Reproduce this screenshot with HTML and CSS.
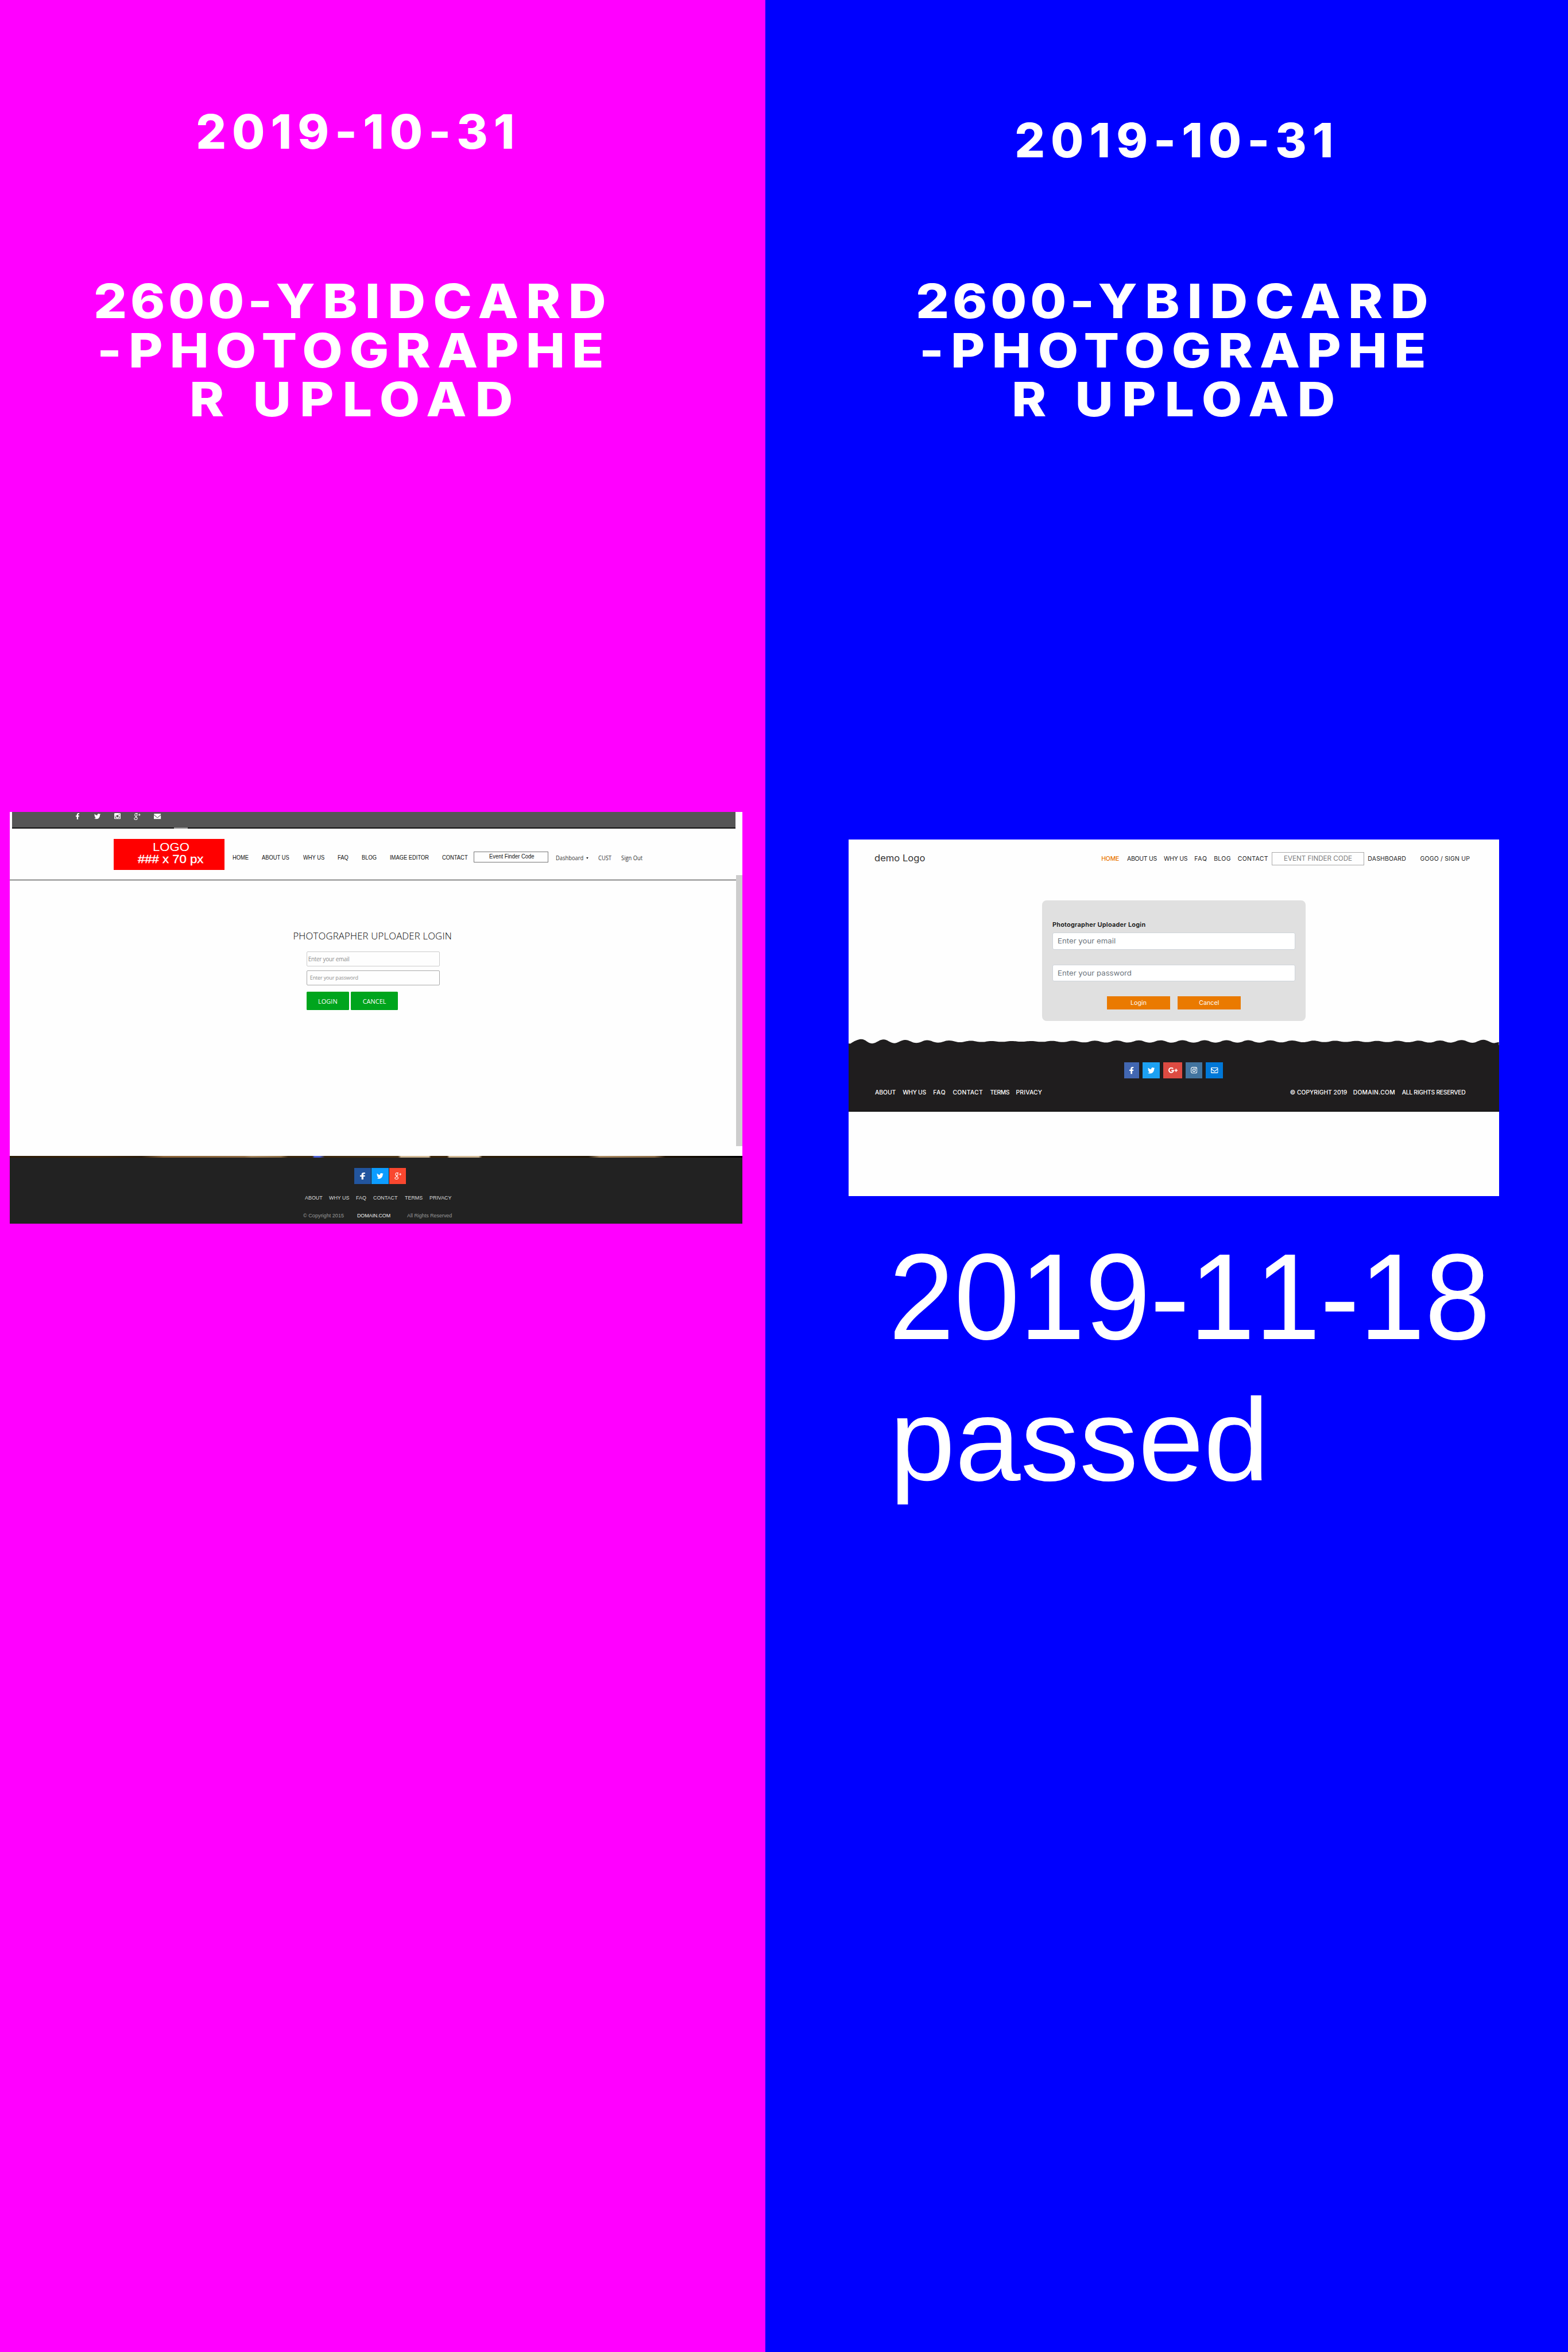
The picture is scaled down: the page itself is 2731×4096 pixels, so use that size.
FILE: index.html
```html
<!DOCTYPE html>
<html lang="en">
<head>
<meta charset="utf-8">
<title>2600-YBIDCARD-PHOTOGRAPHER UPLOAD</title>
<link rel="stylesheet" href="styles.css">
</head>
<body>
<svg class="sprite" aria-hidden="true">
  <symbol id="fb" viewBox="22 0 276 512" preserveAspectRatio="none"><path d="M279.14 288l14.22-92.66h-88.91v-60.13c0-25.35 12.42-50.06 52.24-50.06h40.42V6.26S260.43 0 225.36 0c-73.22 0-121.08 44.38-121.08 124.72v70.62H22.89V288h81.39v224h100.17V288z"/></symbol>
  <symbol id="tw" viewBox="0 48 512 416" preserveAspectRatio="none"><path d="M459.37 151.716c.325 4.548.325 9.097.325 13.645 0 138.72-105.583 298.558-298.558 298.558-59.452 0-114.68-17.219-161.137-47.106 8.447.974 16.568 1.299 25.34 1.299 49.055 0 94.213-16.568 130.274-44.832-46.132-.975-84.792-31.188-98.112-72.772 6.498.974 12.995 1.624 19.818 1.624 9.421 0 18.843-1.3 27.614-3.573-48.081-9.747-84.143-51.98-84.143-102.985v-1.299c13.969 7.797 30.214 12.67 47.431 13.319-28.264-18.843-46.781-51.005-46.781-87.391 0-19.492 5.197-37.36 14.294-52.954 51.655 63.675 129.3 105.258 216.365 109.807-1.624-7.797-2.599-15.918-2.599-24.04 0-57.828 46.782-104.934 104.934-104.934 30.213 0 57.502 12.67 76.67 33.137 23.715-4.548 46.456-13.32 66.599-25.34-7.798 24.366-24.366 44.833-46.132 57.827 21.117-2.273 41.584-8.122 60.426-16.243-14.292 20.791-32.161 39.308-52.628 54.253z"/></symbol>
  <symbol id="ig-old" viewBox="0 0 16 16" preserveAspectRatio="none"><path fill-rule="evenodd" d="M2 0h12q2 0 2 2v12q0 2-2 2H2q-2 0-2-2V2q0-2 2-2zM2 6.8V13q0 1 1 1h10q1 0 1-1V6.8h-1.4A5 5 0 1 1 3.4 6.8zM8 4.9a3.2 3.2 0 1 0 0 6.4 3.2 3.2 0 0 0 0-6.4zM11.4 2h2.2v2.3h-2.2z"/></symbol>
  <symbol id="gp-old" viewBox="0 0 16 16" preserveAspectRatio="none"><g fill="none" stroke="currentColor"><ellipse cx="5.2" cy="4" rx="2.7" ry="3.3" stroke-width="1.5"/><path stroke-width="1.4" d="M5.5.7H9.3M5.2 7.3C3.6 8.6 6.6 9.2 7.6 10.4 9.6 13 7.6 15.3 4.7 15.3 1.6 15.3.4 13.4 1.6 11.6 2.4 10.4 4 9.9 6 9.9"/><path stroke-width="1.3" d="M10.6 3.9H16M13.3 1.2V6.6"/></g></symbol>
  <symbol id="gp" viewBox="0 0 16 10" preserveAspectRatio="none"><g fill="none" stroke="currentColor"><path stroke-width="2" d="M8.1 2.2A4 4 0 1 0 9 5.2H5.2"/><path stroke-width="1.7" d="M10.8 5H16M13.4 2.3V7.7"/></g></symbol>
  <symbol id="ig" viewBox="0 0 16 16" preserveAspectRatio="none"><g fill="none" stroke="currentColor"><rect x=".8" y=".8" width="14.4" height="14.4" rx="4" stroke-width="1.6"/><circle cx="8" cy="8" r="3.2" stroke-width="1.7"/></g><circle cx="12.2" cy="3.8" r="1"/></symbol>
  <symbol id="mail-solid" viewBox="0 0 16 12" preserveAspectRatio="none"><path d="M0 1.2Q0 0 1.2 0h13.6Q16 0 16 1.2v.5L8.8 7.5Q8 8.1 7.2 7.5L0 1.7zM0 3.2l6.5 5.2q1.5 1.1 3 0L16 3.2V10.8Q16 12 14.8 12H1.2Q0 12 0 10.8z"/></symbol>
  <symbol id="mail" viewBox="0 0 16 12" preserveAspectRatio="none"><g fill="none" stroke="currentColor" stroke-width="1.6"><rect x=".8" y=".8" width="14.4" height="10.4" rx=".8"/><path d="M1 3.2 8 8.2l7-5"/></g></symbol>
</svg>

<main class="board">
  <section class="panel panel-design">
    <h2 class="date">2019-10-31</h2>
    <h1 class="title"><span class="l1"><em>2600-</em>YBIDCARD</span><span class="l2">-PHOTOGRAPHE</span><span class="l3">R UPLOAD</span></h1>

    <div class="mock mock-a">
      <div class="topbar">
        <svg class="a-fb"><use href="#fb"/></svg>
        <svg class="a-tw"><use href="#tw"/></svg>
        <svg class="a-ig"><use href="#ig-old"/></svg>
        <svg class="a-gp"><use href="#gp-old"/></svg>
        <svg class="a-ml"><use href="#mail-solid"/></svg>
        <i class="notch"></i>
      </div>
      <header class="head-a">
        <div class="logo-a"><span class="lg1">LOGO</span><span class="lg2">### x 70 px</span></div>
        <a>HOME</a><a>ABOUT US</a><a>WHY US</a><a>FAQ</a><a>BLOG</a><a>IMAGE EDITOR</a><a>CONTACT</a>
        <div class="finder-a"><span>Event Finder Code</span></div>
        <a class="user">Dashboard<i class="caret"></i></a><a class="user">CUST</a><a class="user">Sign Out</a>
      </header>
      <div class="body-a">
        <h3>PHOTOGRAPHER UPLOADER LOGIN</h3>
        <div class="field-a email">Enter your email</div>
        <div class="field-a pass">Enter your password</div>
        <div class="btns-a"><span class="login">LOGIN</span><span class="cancel">CANCEL</span></div>
      </div>
      <div class="strip"></div>
      <footer class="foot-a">
        <div class="social-a">
          <span class="fb"><svg class="s-fb"><use href="#fb"/></svg></span>
          <span class="tw"><svg class="s-tw"><use href="#tw"/></svg></span>
          <span class="gp"><svg class="s-gp"><use href="#gp-old"/></svg></span>
        </div>
        <div class="links-a"><a>ABOUT</a><a>WHY US</a><a>FAQ</a><a>CONTACT</a><a>TERMS</a><a>PRIVACY</a></div>
        <div class="copy-a"><span class="c1">© Copyright 2015</span><b>DOMAIN.COM</b><span>All Rights Reserved</span></div>
      </footer>
      <i class="scroll"></i>
    </div>
  </section>

  <section class="panel panel-build">
    <h2 class="date">2019-10-31</h2>
    <h1 class="title"><span class="l1"><em>2600-</em>YBIDCARD</span><span class="l2">-PHOTOGRAPHE</span><span class="l3">R UPLOAD</span></h1>

    <div class="mock mock-b">
      <header class="head-b">
        <div class="logo-b">demo Logo</div>
        <a class="on">HOME</a><a class="tight">ABOUT US</a><a class="tight">WHY US</a><a class="open">FAQ</a><a class="mid">BLOG</a><a class="mid">CONTACT</a>
        <div class="finder-b">EVENT FINDER CODE</div>
        <a class="wide">DASHBOARD</a><a class="wide">GOGO / SIGN UP</a>
      </header>
      <div class="card">
        <h3>Photographer Uploader Login</h3>
        <div class="field-b"><span>Enter your email</span></div>
        <div class="field-b"><span>Enter your password</span></div>
        <div class="btns-b"><span>Login</span><span>Cancel</span></div>
      </div>
      <svg class="wave" viewBox="0 0 1132.6 12" preserveAspectRatio="none"><path d="M0 12V8.8L3.4 9S14 1.7 22.1 1.7S33 8.8 40.8 8.8S53 2.2 60.7 2.2S72 8.3 79.4 8.3S91 2.9 98.5 2.9S110 7.9 118 7.9S129 3.3 136.7 3.3S148 7.4 155.8 7.4S167 3.8 174.9 3.8S186 6.7 193.6 6.7S205 4.2 212.7 4.2S223 6.3 231 6.3S241 4.7 249 4.7S259 6.1 266.6 6.1S276 4.7 284 4.7S293 5.8 301 5.8S310 4.7 318.3 4.7S328 6.1 336.3 6.1S346 4.5 354.3 4.5S365 6.5 372.6 6.5S383 4.2 391 4.2S402 7 410.4 7S421 4 428.8 4S440 7.2 448.3 7.2S459 3.8 467 3.8S478 7.2 486.4 7.2S498 3.6 505.6 3.6S516 7.4 524.3 7.4S535 3.6 543.4 3.6S554 7.4 562.5 7.4S573 3.3 581.4 3.3S592 7.4 600.9 7.4S612 3.3 620 3.3S631 7.4 639 7.4S650 3.3 658.2 3.3S669 7.4 677.3 7.4S688 3.3 696 3.3S707 7.4 715.4 7.4S726 3.6 734.2 3.6S745 7 753.6 7S764 3.8 772.4 3.8S783 6.7 791.5 6.7S802 4 809.8 4S820 6.5 828.5 6.5S839 4.2 847.3 4.2S857 6.3 865.6 6.3S876 4.5 884.3 4.5S894 6.5 902.3 6.5S912 4.5 920.3 4.5S930 6.5 938.2 6.5S948 4.2 956.2 4.2S966 6.7 974.6 6.7S985 4 992.9 4S1003 7.2 1011.6 7.2S1022 3.8 1030 3.8S1041 7.4 1048.7 7.4S1060 3.1 1067.8 3.1S1079 7.7 1086.5 7.7S1098 2.7 1105.6 2.7S1117 8.1 1124.7 8.1L1132.6 6.4V12z"/></svg>
      <footer class="foot-b">
        <div class="social-b">
          <span class="fb"><svg class="b-fb"><use href="#fb"/></svg></span>
          <span class="tw"><svg class="b-tw"><use href="#tw"/></svg></span>
          <span class="gp"><svg class="b-gp"><use href="#gp"/></svg></span>
          <span class="ig"><svg class="b-ig"><use href="#ig"/></svg></span>
          <span class="ml"><svg class="b-ml"><use href="#mail"/></svg></span>
        </div>
        <div class="links-b"><a>ABOUT</a><a class="tight">WHY US</a><a class="open">FAQ</a><a class="mid">CONTACT</a><a class="tighter">TERMS</a><a class="wide">PRIVACY</a><span>© COPYRIGHT 2019</span><span class="mid">DOMAIN.COM</span><span class="tight">ALL RIGHTS RESERVED</span></div>
      </footer>
    </div>

    <p class="note note-date">2019-11-18</p>
    <p class="note note-status">passed</p>
  </section>
</main>
</body>
</html>
```
FILE: styles.css
```css
* { box-sizing: border-box; }
body { margin: 0; background: #00f; }
h1, h2, h3, p { margin: 0; font-weight: inherit; }
svg { display: block; fill: currentColor; overflow: visible; }
.sprite { position: absolute; width: 0; height: 0; }

.board { display: flex; width: 2731px; height: 4096px; overflow: hidden; white-space: nowrap; }
.panel { display: flex; flex-direction: column; align-items: flex-start; }
.panel-design { width: 1333px; background: #f0f; }
.panel-build { width: 1398px; background: #00f; }

/* Headings */
.date, .title { font: 800 83px/85.3px Inter, sans-serif; color: #fff; }
.date { letter-spacing: 10px; }
.panel-design .date { margin: 186.6px 0 0 341.2px; }
.panel-design .title { margin: 210.4px 0 0 163px; }
.panel-build .date { margin: 202.2px 0 0 434.2px; }
.panel-build .title { margin: 194.8px 0 0 262px; }
.title span { display: block; transform: scaleX(1.1); transform-origin: 0 0; }
.title em { font-style: normal; letter-spacing: 5.3px; }
.l1 { letter-spacing: 12px; }
.l2 { letter-spacing: 10.9px; margin-left: 6.4px; }
.l3 { letter-spacing: 13.7px; margin-left: 167.4px; }

/* Design mock-up */
.mock { flex: none; background: #fefefe; font-family: "Liberation Sans", Arial, sans-serif; }
.mock-a { position: relative; width: 1276.3px; height: 717.5px; margin: 675.8px 0 0 17px; }
.topbar { position: relative; display: grid; grid-template-columns: 31.6px 35px 34.4px 34.6px 20px; align-items: start; width: 1259.7px; height: 28.7px; margin-left: 4.3px; padding: 2px 0 0 111.1px; background: #555; border-bottom: 2px solid #111; color: #fff; }
.a-fb { width: 6.2px; height: 11px; }
.a-tw { width: 11.2px; height: 9.4px; margin-top: 1px; }
.a-ig { width: 11px; height: 10.6px; margin-top: .4px; }
.a-gp { width: 11.8px; height: 12px; }
.a-ml { width: 12.4px; height: 9.6px; margin-top: 1px; }
.notch { position: absolute; left: 281.8px; bottom: -2px; width: 23.5px; height: 1.4px; background: #8a8a8a; }
.head-a { display: grid; grid-template-columns: 207.1px 50.6px 71.9px 60.1px 42.6px 48.5px 91.1px 55.4px 143px 73.5px 40.4px 40px; align-items: start; width: 1265px; height: 90.7px; padding-left: 181px; border-bottom: 1.2px solid #222; font-size: 10.2px; line-height: 12px; color: #111; }
.head-a a { justify-self: start; margin-top: 45px; transform: scaleX(.92); transform-origin: 0 0; }
.logo-a { display: flex; flex-direction: column; align-items: flex-start; width: 193px; height: 54px; margin-top: 18.3px; padding-top: 4px; background: #f00; color: #fff; font-size: 20.3px; line-height: 21.5px; }
.logo-a span { transform: scaleX(1.09); transform-origin: 0 0; }
.lg1 { margin-left: 67.5px; }
.lg2 { margin-left: 42.3px; -webkit-text-stroke: .4px #fff; }
.finder-a { width: 129.3px; height: 19.6px; margin-top: 39.9px; padding: 2.6px 0 0 25.3px; border: 1px solid #777; font-size: 10px; }
.finder-a span { display: block; transform: scaleX(.94); transform-origin: 0 0; }
.head-a .user { font-family: "Open Sans", sans-serif; font-size: 10.4px; color: #333; transform: scaleX(.9); }
.caret { display: inline-block; margin: 0 0 2px 5px; border: 2.2px solid transparent; border-top: 3px solid #111; border-bottom: 0; }
.body-a { height: 480px; padding: 86.5px 0 0 516.8px; font-family: "Open Sans", sans-serif; }
.body-a h3 { margin: 0 0 16.9px -23.4px; font-size: 16.7px; font-weight: 300; line-height: 20px; letter-spacing: .2px; color: #000; }
.field-a { width: 231.8px; height: 26.3px; border: 1px solid #ccc; border-radius: 2px; line-height: 24.3px; color: #8f8f8f; }
.email { padding-left: 2px; font-size: 9.9px; letter-spacing: -.26px; }
.pass { height: 26px; margin-top: 7.1px; padding-left: 5px; border-color: #aaa; font-size: 9.1px; letter-spacing: -.2px; }
.btns-a { display: flex; gap: 3.4px; margin-top: 11.1px; }
.btns-a span { height: 31.7px; padding-top: 1px; border-radius: 1.5px; background: #00a51d; color: #fff; font-size: 11px; line-height: 31px; text-align: center; }
.btns-a .login { width: 74.1px; }
.btns-a .cancel { width: 81.7px; }
.strip { height: 3px; background: linear-gradient(90deg, #2a1a06, #3b2408 12%, #2a1a08 18%, #8a6236 21%, #8c6840 32%, #a08058 33%, #8a6a40 37%, #3a260c 38%, #3a260c 41.3%, #4c60d8 41.6%, #4c60d8 42.3%, #3a260c 43%, #4a3212 53%, #d0b894 53.4%, #d0b894 57.2%, #3a2408 57.5%, #3a2408 59.7%, #d0b894 60%, #d0b894 64%, #2c1c06 64.5%, #241604 79%, #a88860 80.5%, #8a6a44 88%, #1c1002 89.5%, #000); }
.foot-a { height: 114.5px; padding-top: 17.3px; background: #222; font-size: 9.8px; line-height: 12px; color: #ddd; }
.social-a { display: flex; gap: 1.2px; margin-left: 600px; color: #fff; }
.social-a span, .social-b span { display: flex; align-items: center; justify-content: center; height: 28.7px; }
.social-a .fb { width: 28.8px; background: #22559e; }
.social-a .tw { width: 29.7px; background: #0c9cff; }
.social-a .gp { width: 29.6px; background: #f9472f; }
.s-fb { width: 9px; height: 12.3px; }
.s-tw { width: 11.8px; height: 10px; }
.s-gp { width: 12.3px; height: 12.2px; }
.links-a { display: grid; grid-template-columns: 42.7px 46.7px 29.7px 55px 42.7px 50px; margin: 17.7px 0 0 513.8px; }
.links-a a, .copy-a > * { justify-self: start; transform: scaleX(.91); transform-origin: 0 0; }
.copy-a { display: grid; grid-template-columns: 94.7px 86.6px 90px; margin: 18.5px 0 0 510.5px; color: #999; }
.copy-a .c1 { transform: scaleX(.93); }
.copy-a b { font-weight: 400; letter-spacing: -.1px; color: #eee; }
.scroll { position: absolute; top: 110.5px; right: .8px; width: 10.2px; height: 471.4px; background: #cdcdcd; }

/* Built page */
.mock-b { width: 1132.6px; height: 620.6px; margin: 724.3px 0 0 145.3px; font-family: Inter, sans-serif; }
.head-b { display: grid; grid-template-columns: 395.3px 44.8px 64.1px 53.1px 34px 41.5px 59px 167.7px 91.2px 90px; align-items: start; height: 105.1px; padding-left: 44.6px; font-size: 10.5px; line-height: 14px; color: #222; }
.head-b a { margin-top: 26.1px; }
.logo-b { justify-self: start; margin-top: 23px; font-size: 15.5px; line-height: 20px; color: #333; transform: scaleX(1.07); transform-origin: 0 0; }
.head-b .on { color: #ea7600; font-weight: 500; letter-spacing: -.2px; }
.tight { letter-spacing: -.27px; }
.tighter { letter-spacing: -.45px; }
.open { letter-spacing: .8px; }
.mid { letter-spacing: .32px; }
.wide { letter-spacing: .17px; }
.finder-b { width: 161.4px; height: 23.1px; margin-top: 21.3px; padding-left: 20.3px; border: 1.2px solid #aaa; color: #808080; font-size: 11.7px; line-height: 21px; letter-spacing: -.04px; }
.card { width: 459.6px; height: 210.2px; margin-left: 336.3px; padding: 34.1px 18.3px 0; border-radius: 8px; background: #e0e0e0; }
.card h3 { margin-bottom: 6.8px; font-size: 11px; font-weight: 600; line-height: 16px; letter-spacing: .22px; color: #111; }
.field-b { height: 29.6px; padding-left: 8.6px; border: 1px solid #ced4da; border-radius: 3px; background: #fff; color: #6c757d; font-size: 12.2px; line-height: 27.6px; }
.field-b span { display: inline-block; transform: scaleX(1.085); transform-origin: 0 0; }
.field-b + .field-b { margin-top: 25.7px; }
.btns-b { display: flex; gap: 12.6px; margin: 25.4px 0 0 95.1px; }
.btns-b span { width: 110.1px; height: 23.4px; background: #ea7a00; color: #fff; font-size: 10.7px; line-height: 23.4px; text-align: center; }
.wave { width: 1132.6px; height: 12.5px; margin-top: 30.2px; color: #1f1d1e; }
.foot-b { height: 116px; padding-top: 29.8px; background: #1f1d1e; border-bottom: 1.3px solid #000; color: #fff; font-size: 10.3px; font-weight: 500; line-height: 14px; }
.social-b { display: flex; gap: 6.45px; margin-left: 480.1px; }
.social-b span { height: 27.7px; }
.social-b .fb { width: 25.4px; background: #4267b2; }
.social-b .tw { width: 29.6px; background: #1da1f2; }
.social-b .gp { width: 32.8px; background: #dd4b42; }
.social-b .ig { width: 28.1px; background: #42749f; }
.social-b .ml { width: 30px; background: #0078d8; }
.b-fb { width: 7.6px; height: 12.6px; }
.b-tw { width: 12.4px; height: 10.7px; }
.b-gp { width: 16px; height: 10px; }
.b-ig { width: 11.3px; height: 11.5px; }
.b-ml { width: 12.7px; height: 9.9px; }
.links-b { display: grid; grid-template-columns: 48.3px 52.9px 34.3px 65px 45.1px 477.3px 109.8px 85.1px 120px; margin: 17.3px 0 0 45.7px; }

/* Review note */
.note { color: #fff; font-family: "Liberation Sans", Arial, sans-serif; line-height: 246px; font-kerning: none; }
.note-date { margin: 52px 0 0 215px; font-size: 214px; transform: scaleX(.957); transform-origin: 0 0; }
.note-status { margin: 3px 0 0 216.5px; font-size: 205px; }
```
